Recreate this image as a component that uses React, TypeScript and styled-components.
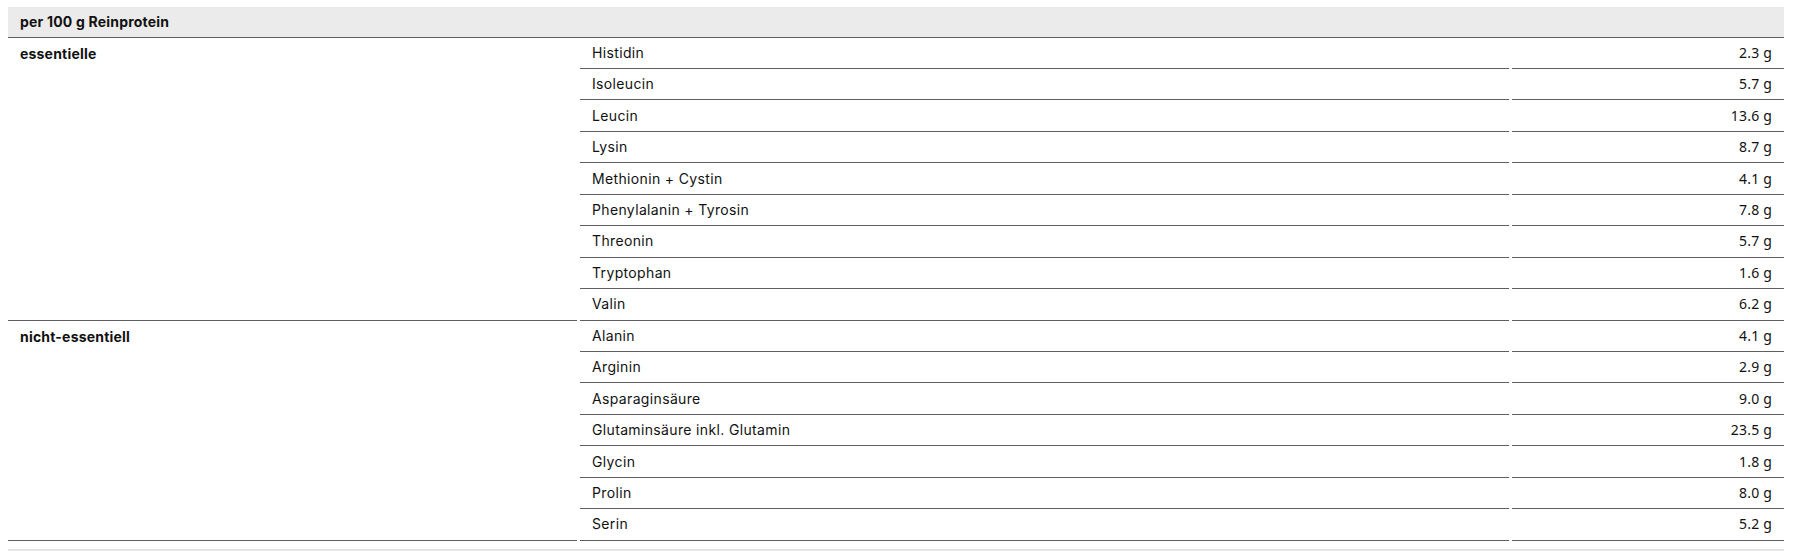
import React from "react";
import styled, { createGlobalStyle } from "styled-components";

const Global = createGlobalStyle`
  html, body { margin: 0; padding: 0; background: #fff; }
  body { font-family: Inter, "Noto Sans", Arial, sans-serif; color: #111; }
`;

const Page = styled.div`
  padding: 7px 10px 0 8px;
`;

const Table = styled.div`
  display: grid;
  grid-template-columns: 569fr 929fr 272fr;
  column-gap: 3px;
`;

const HeaderCell = styled.div`
  grid-column: 1 / -1;
  background: #ebebeb;
  height: 30.5px;
  box-sizing: border-box;
  border-bottom: 1px solid #5f5f5f;
  display: flex;
  align-items: center;
  padding: 0 12px;
  font-weight: 700;
  font-size: 14px;
  letter-spacing: 0.2px;
`;

const ROW = 31.45;

const Cell = styled.div<{ $align?: "left" | "right"; $bold?: boolean; $span?: number }>`
  height: ${(p) => (p.$span ? p.$span * ROW : ROW)}px;
  ${(p) => (p.$span ? `grid-row: span ${p.$span};` : "")}
  box-sizing: border-box;
  border-bottom: 1px solid #5f5f5f;
  display: flex;
  align-items: ${(p) => (p.$span ? "flex-start" : "center")};
  ${(p) => (p.$span ? "padding-top: 8px;" : "")}
  justify-content: ${(p) => (p.$align === "right" ? "flex-end" : "flex-start")};
  padding-left: 12px;
  padding-right: 12px;
  font-size: 14px;
  letter-spacing: ${(p) => (p.$bold ? "0.2px" : "0.35px")};
  font-weight: ${(p) => (p.$bold ? 700 : 400)};
  line-height: 16px;
`;

const Value = styled.span`
  font-family: "Noto Sans", "DejaVu Sans", sans-serif;
  font-size: 14px;
  letter-spacing: 0.2px;
`;

const Footer = styled.div`
  margin-top: 8px;
  border-top: 2px solid #e6e6e6;
`;

type Group = { name: string; items: [string, string][] };

const groups: Group[] = [
  {
    name: "essentielle",
    items: [
      ["Histidin", "2.3 g"],
      ["Isoleucin", "5.7 g"],
      ["Leucin", "13.6 g"],
      ["Lysin", "8.7 g"],
      ["Methionin + Cystin", "4.1 g"],
      ["Phenylalanin + Tyrosin", "7.8 g"],
      ["Threonin", "5.7 g"],
      ["Tryptophan", "1.6 g"],
      ["Valin", "6.2 g"],
    ],
  },
  {
    name: "nicht-essentiell",
    items: [
      ["Alanin", "4.1 g"],
      ["Arginin", "2.9 g"],
      ["Asparaginsäure", "9.0 g"],
      ["Glutaminsäure inkl. Glutamin", "23.5 g"],
      ["Glycin", "1.8 g"],
      ["Prolin", "8.0 g"],
      ["Serin", "5.2 g"],
    ],
  },
];

export default function App() {
  return (
    <Page>
      <Global />
      <Table>
        <HeaderCell>per 100 g Reinprotein</HeaderCell>
        {groups.map((g) => (
          <React.Fragment key={g.name}>
            <Cell $bold $span={g.items.length} style={{ gridColumn: 1 }}>
              {g.name}
            </Cell>
            {g.items.map(([n, v]) => (
              <React.Fragment key={n}>
                <Cell style={{ gridColumn: 2 }}>{n}</Cell>
                <Cell $align="right" style={{ gridColumn: 3 }}>
                  <Value>{v}</Value>
                </Cell>
              </React.Fragment>
            ))}
          </React.Fragment>
        ))}
      </Table>
      <Footer />
    </Page>
  );
}
